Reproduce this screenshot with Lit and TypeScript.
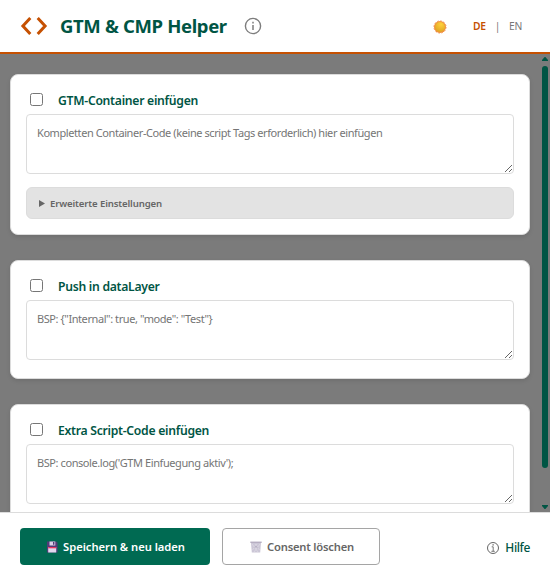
import { LitElement, html, css } from "lit";
import { customElement, property } from "lit/decorators.js";

@customElement("script-card")
class ScriptCard extends LitElement {
  @property() heading = "";
  @property() hint = "";
  @property() advanced = "";

  static styles = css`
    :host { display: block; flex: none; box-sizing: border-box; background: #fff; border: 1px solid #dcdcdc; border-radius: 8px; padding: 0 15px 15px; box-shadow: 0 2px 4px rgba(0, 0, 0, 0.1); }
    .top { height: 39px; display: flex; align-items: flex-start; }
    .check { margin: 18px 15px 0 4px; width: 13px; height: 13px; flex: none; }
    .title { margin-top: 16px; font-size: 12.2px; line-height: 20px; font-weight: 650; color: #005544; white-space: nowrap; letter-spacing: -0.28px; }
    .code { display: block; box-sizing: border-box; width: 100%; height: 60px; margin: 0; padding: 9px 10px; border: 1px solid #dcdcdc; border-radius: 4px; background: #fff; resize: vertical; outline: none; font: 11px/17px "Noto Sans", sans-serif; letter-spacing: -0.42px; color: #333; overflow: hidden; }
    .code::placeholder { color: #757575; opacity: 1; }
    .more { box-sizing: border-box; height: 32px; margin-top: 13px; padding: 0 12px; border: 1px solid #dcdcdc; border-radius: 6px; background: #e3e3e3; display: flex; align-items: center; font-size: 9.6px; font-weight: 600; letter-spacing: -0.14px; color: #666; gap: 5px; white-space: nowrap; }
    .tri { width: 6px; height: 7px; fill: #666; flex: none; }
    .gap { height: 3px; }
  `;

  render() {
    return html`
      <div class="top">
        <input class="check" type="checkbox" aria-label=${this.heading} />
        <span class="title">${this.heading}</span>
      </div>
      <textarea class="code" placeholder=${this.hint} spellcheck="false"></textarea>
      ${this.advanced
        ? html`<div class="more"><svg class="tri" viewBox="0 0 6 7"><path d="M0 0 6 3.5 0 7z" /></svg><span>${this.advanced}</span></div>`
        : html`<div class="gap"></div>`}
    `;
  }
}

@customElement("app-root")
class AppRoot extends LitElement {
  static styles = css`
    :host { display: flex; flex-direction: column; height: 580px; width: 550px; overflow: hidden; background: #fff; font-family: "Noto Sans", sans-serif; }
    .header { box-sizing: border-box; height: 54px; flex: none; border-bottom: 2px solid #c65102; display: flex; align-items: center; padding: 0 28px 0 20px; }
    .logo { width: 28px; height: 20px; flex: none; }
    .brand { margin: 0 0 0 12px; width: 167px; font-size: 18.5px; line-height: 26px; font-weight: 700; letter-spacing: -0.35px; color: #005544; white-space: nowrap; }
    .info { width: 18px; height: 18px; margin-left: 17px; flex: none; }
    .sun { width: 14px; height: 14px; margin-left: auto; margin-top: 2px; flex: none; }
    .langs { display: flex; align-items: center; margin-left: 26px; width: 49px; justify-content: space-between; font-size: 10.3px; letter-spacing: -0.3px; color: #777; }
    .active { color: #c65102; font-weight: 600; }
    .body { flex: 1; min-height: 0; background: #7b7b7b; display: flex; justify-content: space-between; overflow: hidden; }
    .list { width: 520px; padding: 20px 0 0 10px; display: flex; flex-direction: column; gap: 25px; }
    .rail { width: 8px; display: flex; flex-direction: column; align-items: flex-start; padding-top: 3px; }
    .arrow { width: 6px; height: 4px; fill: #005544; flex: none; }
    .thumb { width: 6px; height: 402px; margin: 5px 0 37px; border-radius: 3px; background: #005544; flex: none; }
    .footer { box-sizing: border-box; height: 68px; flex: none; border-top: 1px solid #dcdcdc; padding: 15px 20px 0; display: flex; align-items: flex-start; background: #fff; }
    .btn { box-sizing: border-box; height: 37px; border-radius: 4px; display: flex; align-items: center; justify-content: center; gap: 5px; font: 600 11.2px/16px "Noto Sans", sans-serif; letter-spacing: -0.03px; padding: 0; white-space: nowrap; }
    .save { width: 190px; border: 0; background: #006a52; color: #fff; padding-left: 1px; }
    .clear { width: 158px; margin-left: 12px; border: 1px solid #a5a5a5; background: #fff; color: #666; letter-spacing: -0.2px; padding-left: 2px; }
    .emoji { width: 12px; height: 12px; flex: none; }
    .help { margin-left: auto; height: 39px; display: flex; align-items: center; gap: 6px; font-size: 12px; font-weight: 500; letter-spacing: -0.4px; color: #005544; }
    .helpicon { width: 12px; height: 12px; }
  `;

  render() {
    return html`
      <header class="header">
        <svg class="logo" viewBox="0 0 28 20" fill="none" stroke="#c65102" stroke-width="3"><path d="M10.3 2 2.9 10l7.4 8M17.7 2l7.4 8-7.4 8" /></svg>
        <h1 class="brand">GTM &amp; CMP Helper</h1>
        <svg class="info" viewBox="0 0 18 18"><circle cx="9" cy="9" r="7.6" fill="none" stroke="#7d7d7d" stroke-width="1.4" /><path d="M8.2 4.8h1.6v1.6H8.2zM8.2 8h1.6v5H8.2z" fill="#858585" /></svg>
        <svg class="sun" viewBox="0 0 14 14">
          <defs><radialGradient id="sun" cx=".6" cy=".25" r=".8"><stop offset="0" stop-color="#ffd03c" /><stop offset="1" stop-color="#dda321" /></radialGradient></defs>
          <circle cx="7" cy="7" r="6" fill="#f0903f" /><circle cx="7" cy="7" r="6.1" fill="none" stroke="#f08a40" stroke-width=".8" stroke-dasharray="1.7 1.44" /><circle cx="7" cy="7" r="5" fill="url(#sun)" />
        </svg>
        <nav class="langs"><span class="active">DE</span><span>|</span><span>EN</span></nav>
      </header>
      <main class="body">
        <div class="list">
          <script-card heading="GTM-Container einfügen" hint="Kompletten Container-Code (keine script Tags erforderlich) hier einfügen" advanced="Erweiterte Einstellungen"></script-card>
          <script-card heading="Push in dataLayer" hint=${'BSP: {"Internal": true, "mode": "Test"}'}></script-card>
          <script-card heading="Extra Script-Code einfügen" hint="BSP: console.log('GTM Einfuegung aktiv');"></script-card>
        </div>
        <div class="rail">
          <svg class="arrow" viewBox="0 0 6 4"><path d="M2.6 0h.8L6 3v1H0V3z" /></svg>
          <div class="thumb"></div>
          <svg class="arrow" viewBox="0 0 6 4"><path d="M0 0h6v1L3.4 4h-.8L0 1z" /></svg>
        </div>
      </main>
      <footer class="footer">
        <button class="btn save">
          <svg class="emoji" viewBox="0 0 12 12"><path d="M1 .5h9.3l1.2 1.2v9.8H1z" fill="#533b78" /><path d="M3.5.5h5.8v4H3.5z" fill="#d9d1e8" /><path d="M7 1h1.4v2.7H7z" fill="#533b78" /><path d="M2.2 6h8v5.5h-8z" fill="#e2d8ee" /><path d="M2.2 6h8v1.3h-8z" fill="#e8365d" /></svg>
          <span>Speichern &amp; neu laden</span>
        </button>
        <button class="btn clear">
          <svg class="emoji" viewBox="0 0 12 12"><path d="M1 1.5h10l-.8 10H1.8z" fill="#cbc6d6" /><path d="M.3.6h11.4v1.3H.3z" fill="#b0a9bd" /><path d="m2 3 6 8M5 3l4.5 6M10 3l-6 8M7 3 2.5 9" stroke="#e4e0ea" stroke-width=".6" /><path d="m4.5 6.8 1.5-2 1.7 2.4" fill="none" stroke="#a59eb4" stroke-width=".6" /></svg>
          <span>Consent löschen</span>
        </button>
        <div class="help">
          <svg class="helpicon" viewBox="0 0 12 12"><circle cx="6" cy="6" r="5.5" fill="none" stroke="#555" stroke-width=".9" /><path d="M5.5 2.2h1.2v1.2H5.5z" fill="#555" /><path d="M4.7 4.8h1.5v4.4M4.4 9.3h3.4" fill="none" stroke="#555" stroke-width=".8" /></svg>
          <span>Hilfe</span>
        </div>
      </footer>
    `;
  }
}
